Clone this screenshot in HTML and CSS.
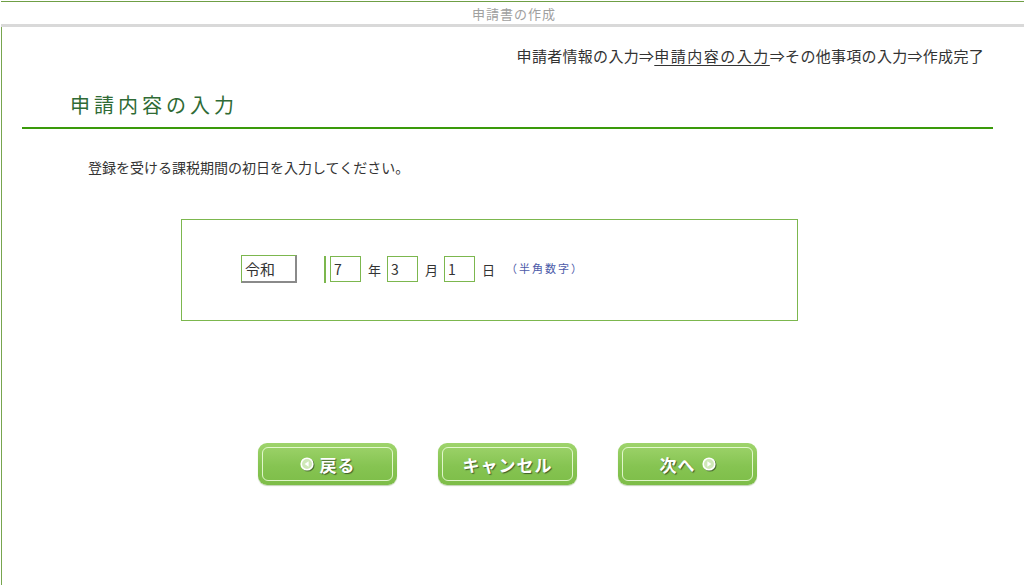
FILE: index.html
```html
<!DOCTYPE html>
<html lang="ja">
<head>
<meta charset="utf-8">
<title>申請書の作成</title>
<link rel="stylesheet" href="styles.css">
</head>
<body>
<div class="frame">
  <header class="titlebar">申請書の作成</header>
  <div class="sepbar"></div>
  <main class="main">
    <div class="crumbs">申請者情報の入力⇒<span class="current">申請内容の入力</span>⇒その他事項の入力⇒作成完了</div>
    <h1 class="heading">申請内容の入力</h1>
    <p class="lead">登録を受ける課税期間の初日を入力してください。</p>
    <div class="datebox">
      <div class="era">令和</div>
      <div class="divider"></div>
      <div class="num">7</div><span class="unit">年</span>
      <div class="num">3</div><span class="unit">月</span>
      <div class="num">1</div><span class="unit">日</span>
      <span class="hint">（半角数字）</span>
    </div>
    <div class="buttons">
      <div class="btn"><span class="btn-inner"><svg class="ico" width="14" height="14" viewBox="0 0 14 14"><circle cx="7" cy="7" r="5.8" fill="#cfe8b8" stroke="#ffffff" stroke-width="1.6"/><path d="M8.6 4.2 L4.6 7 L8.6 9.8 Z" fill="#ffffff"/></svg>戻る</span></div>
      <div class="btn"><span class="btn-inner">キャンセル</span></div>
      <div class="btn"><span class="btn-inner">次へ<svg class="ico ico-r" width="14" height="14" viewBox="0 0 14 14"><circle cx="7" cy="7" r="5.8" fill="#cfe8b8" stroke="#ffffff" stroke-width="1.6"/><path d="M5.4 4.2 L9.4 7 L5.4 9.8 Z" fill="#ffffff"/></svg></span></div>
    </div>
  </main>
</div>
</body>
</html>
```

FILE: styles.css
```css
* { box-sizing: border-box; }
html, body { margin: 0; padding: 0; background: #fff; }
body {
  font-family: "Noto Sans CJK JP", "Liberation Sans", sans-serif;
  color: #333;
  width: 1024px;
  height: 585px;
  overflow: hidden;
}
.frame {
  padding: 1px 0 0 1px;
  height: 585px;
  display: flex;
  flex-direction: column;
}
.titlebar {
  border-top: 1px solid #6f9f45;
  height: 23px;
  font-size: 13px;
  line-height: 24px;
  color: #a0a0a0;
  text-align: center;
  letter-spacing: 1px;
  padding-left: 3px;
}
.sepbar {
  height: 3px;
  background: #d9d9d9;
}
.main {
  flex: 1;
  border-left: 1px solid #77a54e;
  padding: 0;
}
.crumbs {
  text-align: right;
  padding: 18px 40px 0 0;
  font-size: 15px;
  line-height: 22px;
  letter-spacing: 0.3px;
  color: #333;
  height: 40px;
}
.crumbs .current {
  text-decoration: underline;
  text-underline-offset: 3px;
  letter-spacing: 1.5px;
}
.heading {
  margin: 25px 31px 0 20px;
  padding: 0 0 9px 48px;
  font-size: 20px;
  line-height: 26px;
  font-weight: normal;
  letter-spacing: 4px;
  color: #2f6b35;
  border-bottom: 2px solid #3a9a0a;
}
.lead {
  margin: 29px 0 0 86px;
  font-size: 14px;
  line-height: 18px;
  color: #333;
}
.datebox {
  margin: 43px 0 0 179px;
  width: 617px;
  height: 102px;
  border: 1px solid #7cb74e;
  display: flex;
  align-items: center;
  padding: 0 0 2px 59px;
}
.era {
  width: 56px;
  height: 28px;
  border: 1px solid #7cb74e;
  border-right-color: #8a8a8a;
  border-bottom-color: #8a8a8a;
  border-right-width: 2px;
  border-bottom-width: 2px;
  font-size: 15px;
  line-height: 25px;
  padding-left: 3px;
  color: #333;
}
.divider {
  width: 2px;
  height: 27px;
  background: #7cb74e;
  margin-left: 27px;
}
.num {
  width: 31px;
  height: 26px;
  border: 1px solid #7cb74e;
  font-size: 14px;
  line-height: 24px;
  padding-left: 3px;
  color: #333;
  margin-left: 4px;
}
.unit {
  font-size: 13px;
  margin: 0 6px 0 7px;
  color: #333;
}
.unit + .num { margin-left: 0; }
.hint {
  font-size: 11px;
  color: #4c5aa8;
  letter-spacing: 2px;
  margin-left: 5px;
  padding-bottom: 3px;
}
.buttons {
  display: flex;
  gap: 41px;
  margin: 122px 0 0 256px;
}
.btn {
  width: 139px;
  height: 42px;
  border-radius: 9px;
  background: linear-gradient(#9fd46c, #86c452 55%, #7dbd48);
  padding: 4px;
  box-shadow: 0 1px 1px rgba(80, 130, 40, 0.35);
}
.btn-inner {
  display: flex;
  align-items: center;
  justify-content: center;
  gap: 4px;
  height: 100%;
  border: 1.5px solid rgba(240, 255, 225, 0.85);
  border-radius: 6px;
  color: #fff;
  font-weight: bold;
  font-size: 17px;
  letter-spacing: 1px;
  text-shadow: 1px 1px 1px rgba(40, 60, 30, 0.75);
}
.ico { filter: drop-shadow(1px 1px 0.5px rgba(40, 60, 30, 0.6)); margin-right: 2px; }
.ico-r { margin-left: 2px; margin-right: 0; }
```
